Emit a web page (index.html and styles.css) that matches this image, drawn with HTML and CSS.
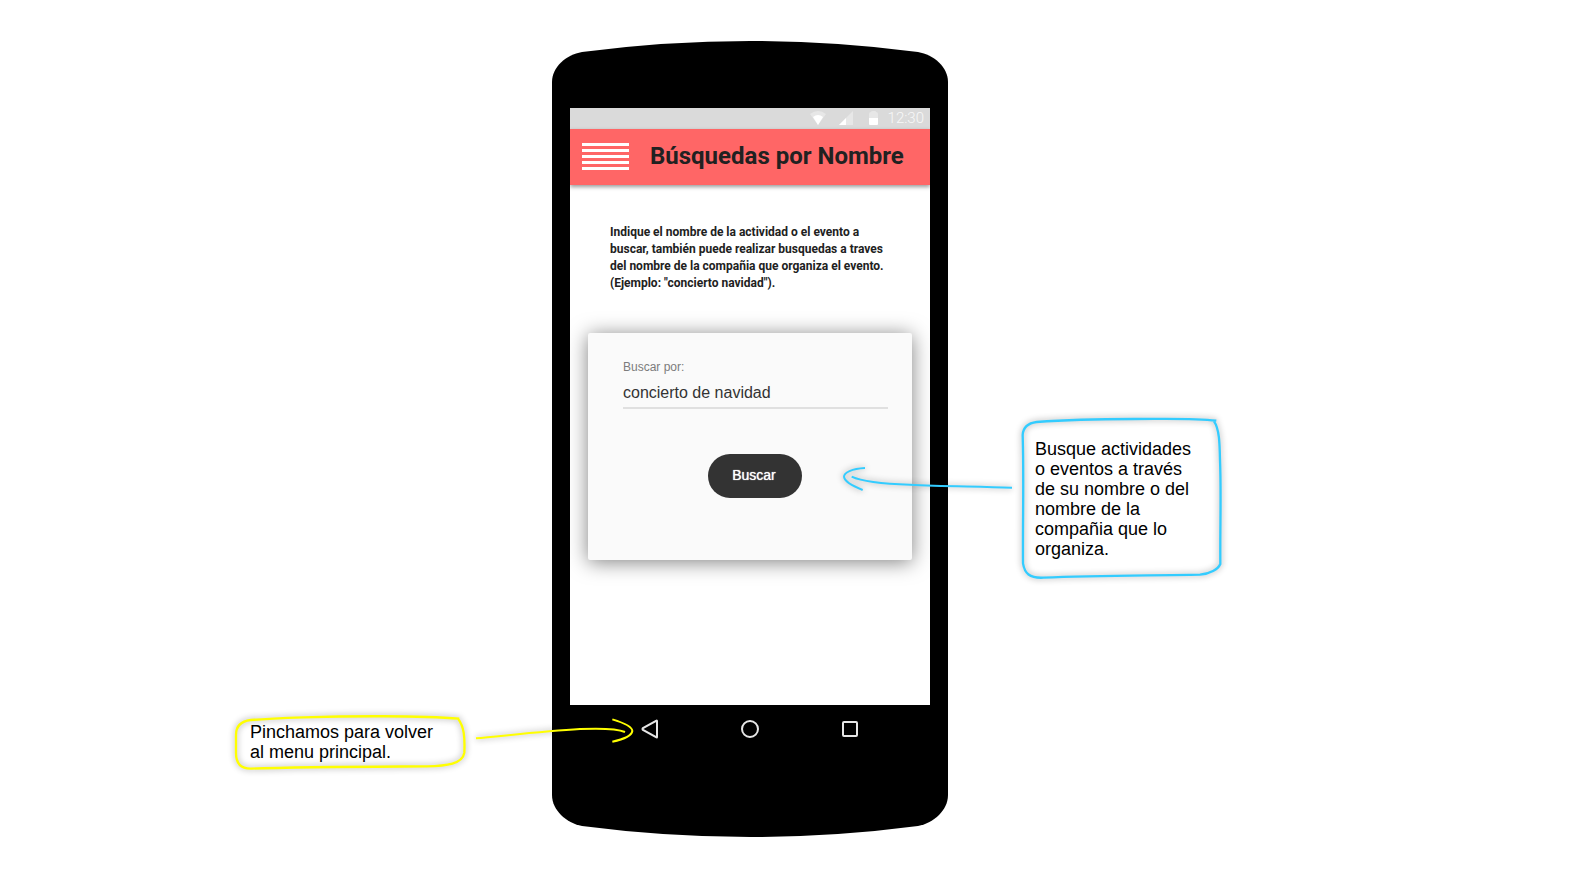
FILE: index.html
```html
<!DOCTYPE html>
<html lang="es">
<head>
<meta charset="utf-8">
<meta name="viewport" content="width=device-width, initial-scale=1">
<title>Búsquedas por Nombre</title>
<link rel="stylesheet" href="styles.css">
</head>
<body>
<main class="board">
  <aside class="note note-back">
    <svg class="note-frame" viewBox="45 48 696 162" preserveAspectRatio="none" aria-hidden="true">
      <path d="M718 56C600 46 380 48 250 52C190 54 130 57 92 60C62 64 48 80 48 104V160C48 190 62 206 92 206C260 200 440 200 620 199C680 198 728 192 733 158C735 110 732 80 714 56"/>
    </svg>
    <p class="note-text">Pinchamos para volver al menu principal.</p>
    <svg class="arrow" viewBox="0 0 720 210" aria-hidden="true">
      <path d="M48 115C120 109 250 93 360 87C430 84 470 85 495 96"/>
      <path d="M457 58C500 71 517 83 517 93C515 107 490 118 457 125"/>
    </svg>
  </aside>

  <section class="phone">
    <svg class="phone-body" viewBox="0 0 396 797" preserveAspectRatio="none" aria-hidden="true">
      <path d="M0 42C0 27 14 15 30 12Q198-10 366 12C382 15 396 27 396 42V755C396 770 382 783 366 786Q198 808 30 786C14 783 0 770 0 755Z"/>
    </svg>
    <div class="screen">
      <div class="status">
        <svg class="status-icons" viewBox="0 0 68 14" aria-hidden="true">
          <path class="dim" d="M0 3Q8-3 16 3L8 14Z"/>
          <path d="M3 6Q8 2 13 6L8 14Z"/>
          <path class="dim" d="M43 0V14H29Z"/>
          <path d="M36 7V14H29Z"/>
          <path class="dim" d="M59 7V3Q59 1 61 1Q61 0 63 0H65Q66 0 66 1Q68 1 68 3V7Z"/>
          <path d="M59 7H68V13Q68 14 67 14H60Q59 14 59 13Z"/>
        </svg>
        <time class="clock">12:30</time>
      </div>
      <header class="appbar">
        <button class="menu" type="button" aria-label="Menú">
          <svg viewBox="0 0 47 27" aria-hidden="true"><path d="M0 0H47V3H0ZM0 6H47V9H0ZM0 12H47V15H0ZM0 18H47V21H0ZM0 24H47V27H0Z"/></svg>
        </button>
        <h1 class="title">Búsquedas por Nombre</h1>
      </header>
      <p class="intro">Indique el nombre de la actividad o el evento a buscar, también puede realizar busquedas a traves del nombre de la compañia que organiza el evento. (Ejemplo: "concierto navidad").</p>
      <form class="card">
        <label class="label" for="query">Buscar por:</label>
        <input class="field" id="query" type="text" value="concierto de navidad">
        <button class="submit" type="button">Buscar</button>
      </form>
    </div>
    <nav class="keys">
      <button class="key" type="button" aria-label="Atrás"><svg viewBox="0 0 20 20"><path d="M17 2V18Q17 19 16 18L3 11Q2 10 3 9L16 2Q17 1 17 2Z"/></svg></button>
      <button class="key" type="button" aria-label="Inicio"><svg viewBox="0 0 20 20"><circle cx="10" cy="10" r="8"/></svg></button>
      <button class="key" type="button" aria-label="Recientes"><svg viewBox="0 0 20 20"><rect x="3" y="3" width="14" height="14" rx="1"/></svg></button>
    </nav>
  </section>

  <aside class="note note-search">
    <svg class="note-frame" viewBox="63 51 600 486" preserveAspectRatio="none" aria-hidden="true">
      <path d="M649 62C580 54 500 57 400 57C300 57 190 60 110 66C80 70 69 86 68 105C72 230 68 360 69 490C74 520 88 535 130 533C290 526 440 527 600 524C630 522 654 508 661 492C660 380 664 280 660 180C659 130 658 86 642 64"/>
    </svg>
    <p class="note-text">Busque actividades o eventos a través de su nombre o del nombre de la compañia que lo organiza.</p>
    <svg class="arrow" viewBox="0 0 600 240" aria-hidden="true">
      <path d="M65 110C90 122 130 131 240 134C340 139 440 139 546 143"/>
      <path d="M105 84C65 86 42 98 42 110C43 122 65 137 98 150"/>
    </svg>
  </aside>
</main>
</body>
</html>
```
FILE: styles.css
```css
* {
  box-sizing: border-box;
}

body {
  margin: 0;
  background: #fff;
  color: #000;
  font-family: "Liberation Sans", Arial, sans-serif;
}

button {
  border: 0;
  padding: 0;
  background: none;
  cursor: pointer;
}

svg {
  display: block;
}

.board {
  display: grid;
  grid-template-columns: 552fr 396px 642fr;
  align-items: start;
  padding: 40px 0 39px;
}

/* Hand-drawn notes */
.note {
  position: relative;
  z-index: 1;
  font-size: 18px;
  line-height: 20px;
}

.note-text {
  position: relative;
  margin: 0;
}

.note-frame,
.arrow {
  position: absolute;
  overflow: visible;
  fill: none;
  stroke-width: 6px;
  stroke-linejoin: round;
  filter: drop-shadow(0 0 3px rgba(0, 0, 0, 0.4));
}

.note-frame {
  inset: 0;
  width: 100%;
  height: 100%;
  stroke-width: 7px;
}

.note-back {
  justify-self: end;
  width: 232px;
  margin: 676px 85px 0 0;
  padding: 6px 26px 8px 15px;
  stroke: #ff0;
}

.note-search {
  width: 200px;
  margin: 377px 0 0 73px;
  padding: 22px 24px 20px 14px;
  stroke: #3cf;
}

.note-back .arrow {
  left: 225px;
  top: -16px;
  width: 240px;
}

.note-search .arrow {
  left: -191px;
  top: 23px;
  width: 200px;
}

/* Phone */
.phone {
  position: relative;
  padding: 68px 18px 84px;
  font-family: Roboto, sans-serif;
}

.phone-body {
  position: absolute;
  inset: 0;
  width: 100%;
  height: 100%;
}

.screen {
  position: relative;
  padding-bottom: 145px;
  background: #fff;
  color: #212121;
}

.status {
  display: flex;
  align-items: center;
  justify-content: flex-end;
  gap: 10px;
  height: 21px;
  padding: 0 6px 2px;
  background: #dadada;
}

.status-icons {
  width: 68px;
  height: 14px;
  fill: #fff;
}

.status-icons .dim {
  fill: #e7e7e7;
}

.clock {
  color: #f8f8f8;
  font-size: 15px;
  font-weight: 300;
  line-height: 18px;
}

.appbar {
  display: flex;
  align-items: center;
  gap: 21px;
  height: 56px;
  padding: 0 12px 2px;
  background: #f66;
  box-shadow: 0 2px 4px rgba(0, 0, 0, 0.4);
}

.menu svg {
  width: 47px;
  height: 27px;
  fill: #fff;
}

.title {
  margin: 0;
  font-size: 24px;
  font-weight: 700;
  line-height: 28px;
  white-space: nowrap;
}

.intro {
  margin: 39px 40px 41px;
  font-size: 12px;
  font-weight: 700;
  line-height: 17px;
}

.card {
  display: flex;
  flex-direction: column;
  margin: 0 18px;
  padding: 27px 24px 62px 35px;
  border-radius: 2px;
  background: #fafafa;
  box-shadow: 0 2px 20px rgba(0, 0, 0, 0.5);
  font-family: "Liberation Sans", Arial, sans-serif;
}

.label {
  color: #7c7c7c;
  font-size: 12px;
  line-height: 14px;
}

.field {
  width: 100%;
  height: 35px;
  padding: 4px 0 0;
  border: 0;
  border-bottom: 2px solid #e0e0e0;
  outline: 0;
  background: none;
  color: #333;
  font: 16px "Liberation Sans", Arial, sans-serif;
}

.submit {
  width: 94px;
  height: 44px;
  margin: 45px 0 0 85px;
  padding: 0 2px 2px 0;
  border-radius: 22px;
  background: #333;
  color: #fff;
  font: 14px "Liberation Sans", Arial, sans-serif;
  text-shadow: 0 0 1px #fff;
}

.keys {
  position: relative;
  display: flex;
  justify-content: space-around;
  align-items: center;
  height: 48px;
  padding: 0 30px;
}

.key svg {
  width: 20px;
  height: 20px;
  fill: none;
  stroke: #e6e6e6;
  stroke-width: 2px;
}
```
